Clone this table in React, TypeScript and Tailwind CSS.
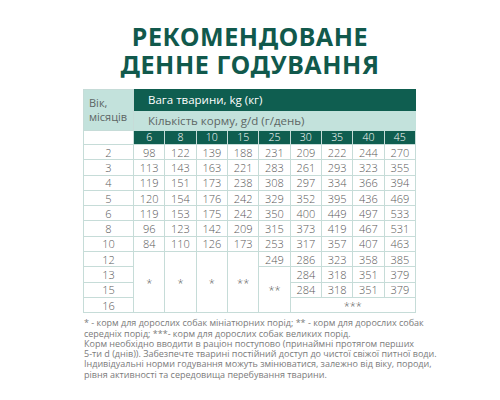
const rows: [string, (string | null)[]][] = [
  ["2", ["98", "122", "139", "188", "231", "209", "222", "244", "270"]],
  ["3", ["113", "143", "163", "221", "283", "261", "293", "323", "355"]],
  ["4", ["119", "151", "173", "238", "308", "297", "334", "366", "394"]],
  ["5", ["120", "154", "176", "242", "329", "352", "395", "436", "469"]],
  ["6", ["119", "153", "175", "242", "350", "400", "449", "497", "533"]],
  ["8", ["96", "123", "142", "209", "315", "373", "419", "467", "531"]],
  ["10", ["84", "110", "126", "173", "253", "317", "357", "407", "463"]],
]

const weights = ["6", "8", "10", "15", "25", "30", "35", "40", "45"]

const td = "border border-[#c6dcd8] text-center text-[11px] text-[#5a5a5a] font-light h-[15.3px] p-0 leading-none"

export default function App() {
  return (
    <div className="w-[500px] h-[400px] bg-white pt-[22px]" style={{ fontFamily: "'Open Sans', 'Noto Sans', sans-serif" }}>
      <h1 className="text-center text-[#11594c] text-[25px] font-bold leading-[28px] tracking-[0.6px]" style={{ fontFamily: "'Noto Sans', sans-serif" }}>
        РЕКОМЕНДОВАНЕ
        <br />
        ДЕННЕ ГОДУВАННЯ
      </h1>

      <table className="ml-[83px] mt-[11px] border-collapse table-fixed w-[333px]">
        <colgroup>
          <col className="w-[50px]" />
          {weights.map((w) => (
            <col key={w} />
          ))}
        </colgroup>
        <tbody>
          <tr className="h-[21px]">
            <td rowSpan={2} className="border border-[#c6dcd8] bg-[#c3e2dc] text-[11px] text-[#5d6664] leading-[14px] pl-[5px] align-middle">
              Вік,
              <br />
              місяців
            </td>
            <td colSpan={9} className="bg-[#0f5e50] text-white text-[11.5px] pl-[14px] border border-[#0f5e50]">
              Вага тварини, kg (кг)
            </td>
          </tr>
          <tr className="h-[20px]">
            <td colSpan={9} className="bg-[#c3e2dc] text-[#5d6664] text-[11.5px] pl-[14px] border border-[#c3e2dc]">
              Кількість корму, g/d (г/день)
            </td>
          </tr>
          <tr className="h-[14px]">
            <td className="border border-[#c6dcd8] bg-white"></td>
            {weights.map((w) => (
              <td key={w} className="bg-[#0f5e50] text-white text-[10.5px] font-light text-center border-x border-[#c6dcd8] leading-none p-0">
                {w}
              </td>
            ))}
          </tr>
          {rows.map(([age, vals]) => (
            <tr key={age}>
              <td className={td}>{age}</td>
              {vals.map((v, i) => (
                <td key={i} className={td}>
                  {v}
                </td>
              ))}
            </tr>
          ))}
          <tr>
            <td className={td}>12</td>
            <td rowSpan={4} className={td}>*</td>
            <td rowSpan={4} className={td}>*</td>
            <td rowSpan={4} className={td}>*</td>
            <td rowSpan={4} className={td}>**</td>
            <td className={td}>249</td>
            <td className={td}>286</td>
            <td className={td}>323</td>
            <td className={td}>358</td>
            <td className={td}>385</td>
          </tr>
          <tr>
            <td className={td}>13</td>
            <td rowSpan={3} className={td}>**</td>
            <td className={td}>284</td>
            <td className={td}>318</td>
            <td className={td}>351</td>
            <td className={td}>379</td>
          </tr>
          <tr>
            <td className={td}>15</td>
            <td className={td}>284</td>
            <td className={td}>318</td>
            <td className={td}>351</td>
            <td className={td}>379</td>
          </tr>
          <tr>
            <td className={td}>16</td>
            <td colSpan={4} className={td}>***</td>
          </tr>
        </tbody>
      </table>

      <p className="ml-[84px] mt-[5px] text-[9px] leading-[10.3px] text-[#7b7b7b] whitespace-nowrap">
        * - корм для дорослих собак мініатюрних порід; ** - корм для дорослих собак
        <br />
        середніх порід; ***- корм для дорослих собак великих порід.
        <br />
        Корм необхідно вводити в раціон поступово (принаймні протягом перших
        <br />
        5-ти d (днів)). Забезпечте тварині постійний доступ до чистої свіжої питної води.
        <br />
        Індивідуальні норми годування можуть змінюватися, залежно від віку, породи,
        <br />
        рівня активності та середовища перебування тварини.
      </p>
    </div>
  )
}
